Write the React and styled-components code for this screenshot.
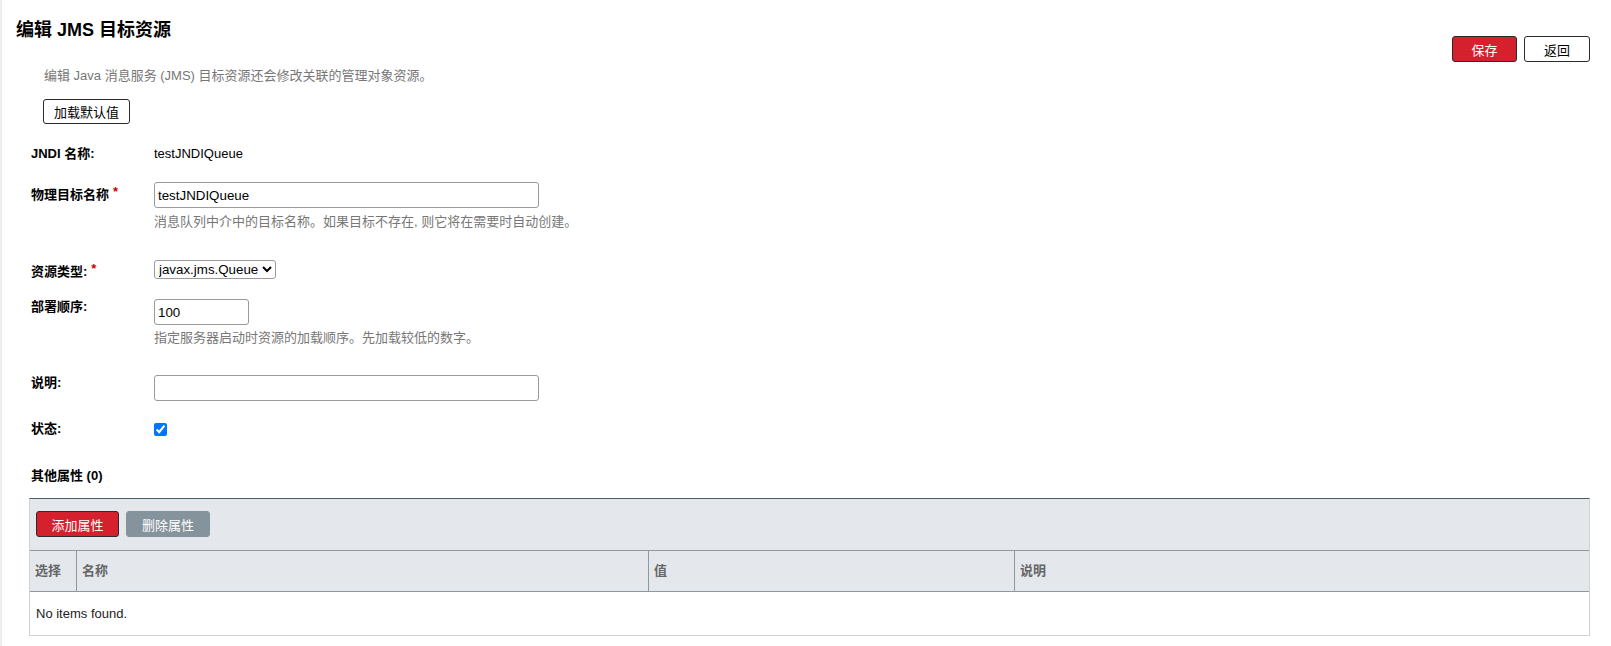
import React from "react";
import styled, { createGlobalStyle } from "styled-components";

const FONT = `"Liberation Sans", Arial, "Noto Sans CJK SC", sans-serif`;
const RED = "#d5202e";

const GlobalStyle = createGlobalStyle`
    html, body {
        margin: 0;
        padding: 0;
        background: #fff;
    }
    body {
        font-family: ${FONT};
        font-size: 13px;
        color: #000;
    }
`;

const Page = styled.div`
    min-height: 646px;
    box-sizing: border-box;
    border-left: 2px solid #eeeeee;
    padding: 19px 21px 0 14px;
`;

const Header = styled.div`
    display: flex;
    justify-content: space-between;
    align-items: flex-start;
`;

const Title = styled.h1`
    margin: 0;
    font-size: 18px;
    line-height: 22px;
    font-weight: bold;
`;

const Intro = styled.p`
    margin: 27px 0 0 28px;
    line-height: 16px;
    color: #777;
`;

const Actions = styled.div`
    display: flex;
    gap: 7px;
    margin-top: 17px;
`;

const Button = styled.button`
    box-sizing: border-box;
    height: ${props => props.tall ? "26px" : "25px"};
    min-width: ${props => props.wide || "auto"};
    padding: 0 10px;
    font-family: ${FONT};
    font-size: 13px;
    border-radius: 3px;
    cursor: pointer;
    border: 1px solid ${props => props.kind === "muted" ? "#85939c" : "#2b2b2b"};
    background: ${props => props.kind === "primary" ? RED : props.kind === "muted" ? "#85939c" : "#fff"};
    color: ${props => props.kind ? "#fff" : "#000"};
`;

const LoadButton = styled(Button)`
    margin: 15px 0 0 27px;
`;

const Form = styled.div`
    margin-top: 22px;
    padding-left: 15px;
`;

const Row = styled.div`
    display: grid;
    grid-template-columns: 123px 1fr;
    align-items: start;
    margin-top: ${props => props.gap}px;
`;

const Label = styled.div`
    font-weight: bold;
    line-height: 16px;
    padding-top: ${props => props.shift || 0}px;
`;

const Req = styled.span`
    color: #c00;
    margin-left: 4px;
    vertical-align: top;
    position: relative;
    top: -3px;
`;

const Value = styled.div`
    line-height: 16px;
`;

const TextInput = styled.input`
    display: block;
    box-sizing: border-box;
    width: ${props => props.size === "small" ? "95px" : "385px"};
    height: 26px;
    padding: 0 3px;
    border: 1px solid #9a9a9a;
    border-radius: 3px;
    font-family: ${FONT};
    font-size: 13.33px;
    color: #000;
`;

const Select = styled.select`
    display: block;
    height: 19px;
    padding: 0;
    border: 1px solid #9a9a9a;
    border-radius: 3px;
    font-family: ${FONT};
    font-size: 13.33px;
    color: #000;
    background: #fff;
`;

const Help = styled.div`
    margin-top: ${props => props.gap || 6}px;
    line-height: 16px;
    color: #777;
`;

const Check = styled.input`
    display: block;
    width: 13px;
    height: 13px;
    margin: 2px 0 0;
`;

const SectionTitle = styled.h2`
    margin: 31px 0 0;
    padding-left: 15px;
    font-size: 13px;
    line-height: 16px;
    font-weight: bold;
`;

const Table = styled.div`
    margin: 14px 0 0 13px;
    border-top: 1px solid #4a5c6b;
    border-left: 1px solid #cfd3d6;
    border-right: 1px solid #cfd3d6;
    border-bottom: 1px solid #cfd3d6;
`;

const Toolbar = styled.div`
    display: flex;
    gap: 7px;
    padding: 12px 6px 13px;
    background: #e4e8ec;
`;

const Columns = styled.div`
    display: grid;
    grid-template-columns: 46px 572px 366px 1fr;
    background: #e4e8ec;
    border-top: 1px solid #8b99a2;
    border-bottom: 1px solid #8b99a2;
`;

const HeadCell = styled.div`
    height: 40px;
    line-height: 40px;
    padding-left: 5px;
    font-weight: bold;
    color: #666;
    border-left: ${props => props.first ? "none" : "1px solid #8b99a2"};
`;

const Empty = styled.div`
    height: 43px;
    line-height: 43px;
    padding-left: 6px;
    color: #222;
`;

export default function App() {
    return (
        <Page>
            <GlobalStyle />
            <Header>
                <div>
                    <Title>编辑 JMS 目标资源</Title>
                    <Intro>编辑 Java 消息服务 (JMS) 目标资源还会修改关联的管理对象资源。</Intro>
                    <LoadButton>加载默认值</LoadButton>
                </div>
                <Actions>
                    <Button kind="primary" tall wide="65px">保存</Button>
                    <Button tall wide="66px">返回</Button>
                </Actions>
            </Header>

            <Form>
                <Row gap={0}>
                    <Label>JNDI 名称:</Label>
                    <Value>testJNDIQueue</Value>
                </Row>
                <Row gap={20}>
                    <Label shift={5}>物理目标名称<Req>*</Req></Label>
                    <Value>
                        <TextInput defaultValue="testJNDIQueue" />
                        <Help>消息队列中介中的目标名称。如果目标不存在, 则它将在需要时自动创建。</Help>
                    </Value>
                </Row>
                <Row gap={30}>
                    <Label shift={4}>资源类型:<Req>*</Req></Label>
                    <Value>
                        <Select defaultValue="javax.jms.Queue">
                            <option>javax.jms.Queue</option>
                            <option>javax.jms.Topic</option>
                        </Select>
                    </Value>
                </Row>
                <Row gap={19}>
                    <Label>部署顺序:</Label>
                    <Value>
                        <TextInput size="small" defaultValue="100" />
                        <Help gap={5}>指定服务器启动时资源的加载顺序。先加载较低的数字。</Help>
                    </Value>
                </Row>
                <Row gap={29}>
                    <Label>说明:</Label>
                    <Value>
                        <TextInput />
                    </Value>
                </Row>
                <Row gap={20}>
                    <Label>状态:</Label>
                    <Value>
                        <Check type="checkbox" defaultChecked />
                    </Value>
                </Row>
            </Form>

            <SectionTitle>其他属性 (0)</SectionTitle>
            <Table>
                <Toolbar>
                    <Button kind="primary" tall wide="83px">添加属性</Button>
                    <Button kind="muted" tall wide="84px">删除属性</Button>
                </Toolbar>
                <Columns>
                    <HeadCell first>选择</HeadCell>
                    <HeadCell>名称</HeadCell>
                    <HeadCell>值</HeadCell>
                    <HeadCell>说明</HeadCell>
                </Columns>
                <Empty>No items found.</Empty>
            </Table>
        </Page>
    );
}
